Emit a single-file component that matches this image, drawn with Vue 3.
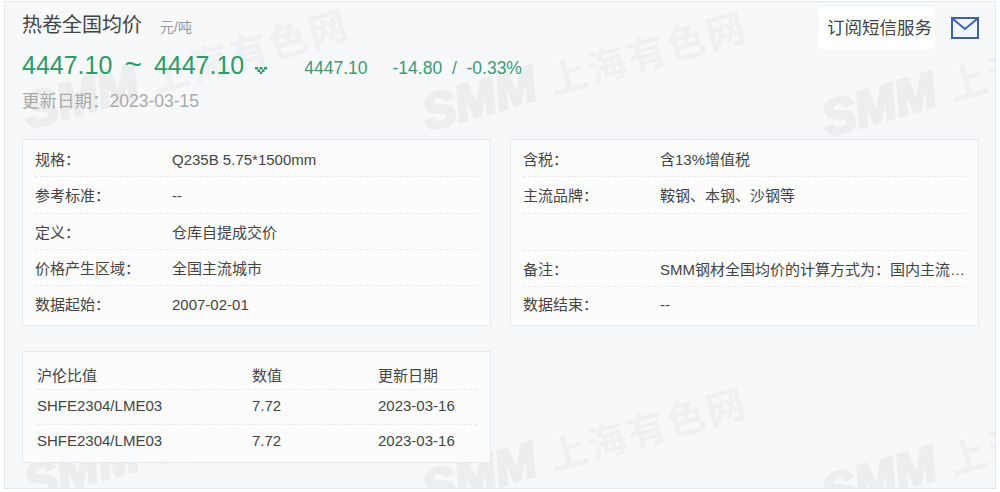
<script setup>
const marks = [
  { id: 1, x: 25, y: 80 },
  { id: 2, x: 423, y: 82 },
  { id: 3, x: 823, y: 88 },
  { id: 4, x: 25, y: 452 },
  { id: 5, x: 423, y: 458 },
  { id: 6, x: 823, y: 462 },
]
const colon = '\uFF1A'
const left = [
  { k: '规格' + colon, v: 'Q235B 5.75*1500mm' },
  { k: '参考标准' + colon, v: '--' },
  { k: '定义' + colon, v: '仓库自提成交价' },
  { k: '价格产生区域' + colon, v: '全国主流城市' },
  { k: '数据起始' + colon, v: '2007-02-01' },
]
const right = [
  { k: '含税' + colon, v: '含13%增值税' },
  { k: '主流品牌' + colon, v: '鞍钢、本钢、沙钢等' },
  { k: '', v: '' },
  { k: '备注' + colon, v: 'SMM钢材全国均价的计算方式为' + colon + '国内主流城市的均价加权计算得出' },
  { k: '数据结束' + colon, v: '--' },
]
const updated = '更新日期' + colon + '2023-03-15'
const ratios = [
  { id: 1, a: 'SHFE2304/LME03', b: '7.72', c: '2023-03-16' },
  { id: 2, a: 'SHFE2304/LME03', b: '7.72', c: '2023-03-16' },
]
</script>

<template>
  <div class="page">
    <div class="panel">
      <div
        v-for="m in marks"
        :key="m.id"
        class="mark"
        :style="{ left: m.x + 'px', top: m.y + 'px' }"
      >
        <span class="mark-en">SMM</span><span class="mark-cn">上海有色网</span>
      </div>

      <header class="head">
        <div class="head-main">
          <div class="title-row">
            <h1 class="title">热卷全国均价</h1>
            <span class="unit">元/吨</span>
          </div>
          <div class="price-row">
            <span class="price">4447.10</span>
            <span class="tilde">~</span>
            <span class="price">4447.10</span>
            <svg class="trend" width="14" height="8" viewBox="0 0 14 8">
              <path d="M1 1h3v2.5H1zM5.500 1h3v2.500h-3zM10 1h3v2.500h-3zM3.500 3.500h2.500V6H3.500zM8 3.500h2.500V6H8zM5.800 5.500h2.400V8H5.800z" fill="#2f9a68" />
            </svg>
            <span class="avg">4447.10</span>
            <span class="delta">-14.80&nbsp; /&nbsp; -0.33%</span>
          </div>
          <div class="date">{{ updated }}</div>
        </div>
        <div class="sub">
          <span class="sub-btn">订阅短信服务</span>
          <svg class="mail" width="28" height="22" viewBox="0 0 28 22">
            <rect x="1" y="1" width="26" height="20" fill="#f2f5fb" stroke="#3a62ad" stroke-width="2" />
            <path d="M2 2l12 10L26 2" fill="none" stroke="#3a62ad" stroke-width="2" />
          </svg>
        </div>
      </header>

      <section class="cards">
        <div class="card">
          <div v-for="(r, i) in left" :key="i" class="row">
            <span class="key">{{ r.k }}</span>
            <span class="val">{{ r.v }}</span>
          </div>
        </div>
        <div class="card card-right">
          <div v-for="(r, i) in right" :key="i" class="row">
            <span class="key">{{ r.k }}</span>
            <span class="val">{{ r.v }}</span>
          </div>
        </div>
      </section>

      <section class="ratio">
        <div class="ratio-row ratio-head">
          <span>沪伦比值</span><span>数值</span><span>更新日期</span>
        </div>
        <div v-for="r in ratios" :key="r.id" class="ratio-row">
          <span>{{ r.a }}</span><span>{{ r.b }}</span><span>{{ r.c }}</span>
        </div>
      </section>
    </div>
  </div>
</template>

<style>
html, body { margin: 0; background: #fff; }
</style>

<style scoped>
.page {
  width: 1000px;
  height: 492px;
  padding: 1px 4px 3px;
  box-sizing: border-box;
  font-family: "Liberation Sans", "Noto Sans CJK SC", sans-serif;
  color: #444;
}
.panel {
  position: relative;
  overflow: hidden;
  height: 100%;
  box-sizing: border-box;
  padding: 0 16px 0 17px;
  background: #f7f8fa;
  border: 1px solid #e6e7ea;
}
.mark {
  position: absolute;
  display: flex;
  align-items: baseline;
  gap: 14px;
  line-height: 60px;
  transform: rotate(-16deg);
  transform-origin: 0 48px;
  white-space: nowrap;
  font-weight: 700;
  pointer-events: none;
}
.mark-en {
  font-size: 50px;
  font-style: italic;
  letter-spacing: 0;
  color: #ecedef;
  -webkit-text-stroke: 3px #ecedef;
}
.mark-cn { font-size: 38px; letter-spacing: 3px; color: #eff0f2; }
.head {
  position: relative;
  display: flex;
  justify-content: space-between;
  height: 137px;
}
.title-row {
  display: flex;
  align-items: baseline;
  gap: 18px;
  padding-top: 9px;
}
.title { margin: 0; font-size: 20px; line-height: 28px; font-weight: 400; color: #444; }
.unit { font-size: 14px; color: #999; }
.price-row {
  display: flex;
  align-items: baseline;
  margin-top: 9px;
  height: 32px;
  color: #2f9a68;
}
.price { font-size: 25px; line-height: 32px; }
.tilde { font-size: 30px; line-height: 32px; margin: 0 12px; }
.trend { margin: 0 0 0 10px; }
.avg { margin-left: 36px; font-size: 17.5px; color: #3d9a72; }
.delta { margin-left: 25px; font-size: 17.5px; color: #3d9a72; }
.date { margin-top: 9px; font-size: 17.5px; line-height: 24px; color: #aaa; }
.sub {
  display: flex;
  align-items: flex-start;
  gap: 16px;
  padding-top: 5px;
}
.sub-btn {
  display: block;
  box-sizing: border-box;
  width: 116px;
  height: 42px;
  padding-left: 5px;
  line-height: 42px;
  text-align: center;
  font-size: 17.5px;
  color: #444;
  background: #fff;
  border-radius: 3px;
}
.mail { margin-top: 10px; }
.cards {
  position: relative;
  display: grid;
  grid-template-columns: 469px 469px;
  gap: 19px;
}
.card {
  height: 187px;
  box-sizing: border-box;
  padding: 1px 12px 0;
  background: rgba(252, 252, 253, 0.9);
  border: 1px solid #e8e9ec;
}
.row {
  display: grid;
  grid-template-columns: 137px minmax(0, 1fr);
  height: 36.300px;
  line-height: 37px;
  box-sizing: border-box;
  font-size: 15px;
  border-bottom: 1px dashed #e8e9ec;
}
.row:last-child { border-bottom: 0; }
.card-right .row:nth-child(3) { height: 37.300px; }
.card-right .row:nth-child(4) { height: 36.600px; line-height: 38px; }
.card-right .row:nth-child(5) { line-height: 35px; }
.val {
  margin-right: -3px;
  overflow: hidden;
  white-space: nowrap;
  text-overflow: ellipsis;
}
.ratio {
  position: relative;
  width: 469px;
  height: 112px;
  margin-top: 25px;
  box-sizing: border-box;
  padding: 6px 13px 0 14px;
  background: rgba(252, 252, 253, 0.9);
  border: 1px solid #e8e9ec;
}
.ratio-row {
  display: grid;
  grid-template-columns: 215px 126px 1fr;
  height: 35px;
  line-height: 31px;
  box-sizing: border-box;
  font-size: 15px;
  border-bottom: 1px dashed #e8e9ec;
}
.ratio-head { height: 32px; line-height: 36px; }
.ratio-row:last-child { border-bottom: 0; }
</style>
